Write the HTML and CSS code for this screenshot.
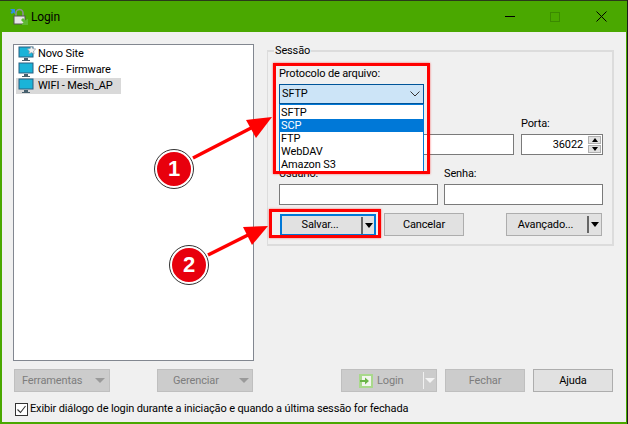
FILE: index.html
```html
<!DOCTYPE html>
<html lang="pt">
<head>
<meta charset="utf-8">
<title>Login</title>
<link rel="stylesheet" href="styles.css">
</head>
<body>
<div class="window">
  <header class="titlebar">
    <svg class="app-icon" width="18" height="18" viewBox="0 0 18 18">
      <path d="M6 8V5a3.500 3.500 0 0 1 7 0v3" fill="none" stroke="#8a8f94" stroke-width="1.600"/>
      <rect x="4" y="8" width="11" height="8" fill="#e6e6e6" stroke="#555"/>
      <path d="M0 1h5v5L3.500 4.500 2 6 0.500 4.500 2 3z" fill="#2f8fe0"/>
      <path d="M18 17h-6v-1l1.500-1.500L11 12l2-2 2.500 2.500L17 11h1z" fill="#5fb834"/>
    </svg>
    <span class="title">Login</span>
    <div class="win-controls">
      <span class="ctl ctl-min"></span>
      <span class="ctl ctl-max"></span>
      <svg class="ctl-close" width="11" height="11" viewBox="0 0 11 11"><path d="M.5.500l10 10M10.500.500l-10 10" stroke="#000" stroke-width="1" fill="none"/></svg>
    </div>
  </header>

  <div class="client">
    <div class="main">
      <ul class="site-list">
        <li class="site">
          <svg class="monitor" width="18" height="16" viewBox="0 0 18 16">
            <rect x="1" y="1" width="14" height="10" fill="#1ab3d8" stroke="#2b5f80"/>
            <path d="M6 12h4v2h2v1H4v-1h2z" fill="#47606e"/>
            <path d="M13.500 0l1.300 2.600 2.900.4-2.100 2 .5 2.900-2.600-1.400-2.600 1.400.5-2.900-2.100-2 2.900-.4z" fill="#f2f2f2" stroke="#8f9aa3" stroke-width=".7"/>
          </svg>
          <span>Novo Site</span>
        </li>
        <li class="site">
          <svg class="monitor" width="18" height="16" viewBox="0 0 18 16">
            <rect x="1" y="1" width="14" height="10" fill="#1ab3d8" stroke="#2b5f80"/>
            <path d="M6 12h4v2h2v1H4v-1h2z" fill="#47606e"/>
          </svg>
          <span>CPE - Firmware</span>
        </li>
        <li class="site site-selected">
          <svg class="monitor" width="18" height="16" viewBox="0 0 18 16">
            <rect x="1" y="1" width="14" height="10" fill="#1ab3d8" stroke="#2b5f80"/>
            <path d="M6 12h4v2h2v1H4v-1h2z" fill="#47606e"/>
          </svg>
          <span>WIFI - Mesh_AP</span>
        </li>
      </ul>

      <section class="group">
        <div class="group-title">Sessão</div>
        <div class="field-label label-protocol">Protocolo de arquivo:</div>
        <div class="combo-wrap">
          <div class="combo">
            <span>SFTP</span>
            <svg width="10" height="6" viewBox="0 0 10 6"><path d="M.5.500l4.500 4.500 4.500-4.500" fill="none" stroke="#333" stroke-width="1"/></svg>
          </div>
          <ul class="combo-list">
            <li>SFTP</li>
            <li class="combo-active">SCP</li>
            <li>FTP</li>
            <li>WebDAV</li>
            <li>Amazon S3</li>
          </ul>
        </div>

        <div class="row-host">
          <div class="col">
            <div class="field-label"></div>
            <div class="input"></div>
          </div>
          <div class="col">
            <div class="field-label">Porta:</div>
            <div class="input input-port">
              <span>36022</span>
              <div class="spin">
                <span class="spin-btn"><i class="tri-up"></i></span>
                <span class="spin-btn"><i class="tri-down"></i></span>
              </div>
            </div>
          </div>
        </div>

        <div class="row-user">
          <div class="col">
            <div class="field-label">Usuário:</div>
            <div class="input"></div>
          </div>
          <div class="col">
            <div class="field-label">Senha:</div>
            <div class="input"></div>
          </div>
        </div>

        <div class="row-actions">
          <button class="btn btn-save" type="button">
            <span class="btn-text">Salvar...</span>
            <span class="split"></span><i class="tri-menu"></i>
          </button>
          <button class="btn btn-cancel" type="button">Cancelar</button>
          <button class="btn btn-advanced" type="button">
            <span class="btn-text">Avançado...</span>
            <span class="split"></span><i class="tri-menu"></i>
          </button>
        </div>
      </section>
    </div>

    <div class="bottom-buttons">
      <button class="btn btn-off btn-tool" type="button"><span>Ferramentas</span><i class="tri-off"></i></button>
      <button class="btn btn-off btn-manage" type="button"><span>Gerenciar</span><i class="tri-off"></i></button>
      <button class="btn btn-off btn-login" type="button">
        <svg width="14" height="14" viewBox="0 0 14 14"><rect width="14" height="14" fill="#a9d98c"/><rect x="3" y="2" width="9" height="10" fill="#f2f6ee"/><path d="M1 6h5V3.500L10 7l-4 3.500V8H1z" fill="#6bb548"/></svg>
        <span class="login-text">Login</span>
        <span class="split split-off"></span><i class="tri-off tri-off-small"></i>
      </button>
      <button class="btn btn-off btn-close" type="button">Fechar</button>
      <button class="btn btn-help" type="button">Ajuda</button>
    </div>

    <label class="check-row">
      <svg width="13" height="13" viewBox="0 0 13 13"><rect x=".5" y=".5" width="12" height="12" fill="#fff" stroke="#333"/><path d="M2.500 6.500l3 3 5-6.500" fill="none" stroke="#333" stroke-width="1.100"/></svg>
      <span>Exibir diálogo de login durante a iniciação e quando a última sessão for fechada</span>
    </label>
  </div>

  <div class="mark mark-protocol"></div>
  <div class="mark mark-save"></div>

  <svg class="arrows" width="628" height="424" viewBox="0 0 628 424">
    <path d="M193 158L253 127" stroke="#f00" stroke-width="3.500" fill="none"/>
    <path d="M272 117L246 120L256 138z" fill="#f00"/>
    <path d="M208 255L248 235" stroke="#f00" stroke-width="3.500" fill="none"/>
    <path d="M268 226L243 227L252 245z" fill="#f00"/>
  </svg>
  <div class="badge badge-1">1</div>
  <div class="badge badge-2">2</div>
</div>
</body>
</html>
```

FILE: styles.css
```css
* { box-sizing: border-box; }
html, body { margin: 0; padding: 0; }
body {
  width: 628px;
  height: 424px;
  overflow: hidden;
  background: #1c1c1c;
  font-family: "Roboto", "Liberation Sans", sans-serif;
  font-size: 11px;
  letter-spacing: -.14px;
  line-height: 14px;
  color: #000;
}
ul { list-style: none; margin: 0; padding: 0; }

.window {
  position: relative;
  width: 627px;
  height: 424px;
  display: flex;
  flex-direction: column;
  background: #f0f0f0;
  border-left: 2px solid #4aa800;
  border-right: 1px solid #4aa800;
  border-bottom: 2px solid #4aa800;
}

/* Title bar */
.titlebar {
  height: 32px;
  flex: none;
  display: flex;
  align-items: center;
  background: #4aa800;
  border-top: 1px solid #2a3a1a;
  margin-left: -2px;
  margin-right: -1px;
  padding-left: 10px;
}
.app-icon { flex: none; }
.title { margin-left: 3px; font-size: 12px; }
.win-controls {
  margin-left: auto;
  display: flex;
  align-items: center;
  padding-right: 20px;
}
.ctl-min { width: 10px; height: 1px; background: #000; margin-right: 35px; }
.ctl-max { width: 10px; height: 10px; border: 1px solid #3b8a00; margin-right: 36px; }
.ctl-close { display: block; }

/* Client */
.client {
  flex: 1;
  display: flex;
  flex-direction: column;
  padding: 12px 13px 0 11px;
}
.main { display: flex; }

.site-list {
  width: 241px;
  height: 317px;
  flex: none;
  background: #fff;
  border: 1px solid #828790;
  padding: 1px 2px;
}
.site {
  display: flex;
  align-items: center;
  height: 16px;
  width: 105px;
  padding-left: 2px;
  white-space: nowrap;
}
.site .monitor { flex: none; margin-right: 2px; }
.site-selected { background: #d9d9d9; }

/* Session group */
.group {
  width: 347px;
  height: 196px;
  margin: 6px 0 0 13px;
  border: 1px solid #dcdcdc;
  border-width: 2px 2px 2px 1px;
  padding: 0 10px 0 11px;
  flex: none;
}
.group-title {
  width: max-content;
  margin: -8px 0 0 -5px;
  padding: 0 1px;
  height: 14px;
  background: #f0f0f0;
}
.field-label { height: 14px; line-height: 14px; }
.label-protocol { margin-top: 9px; }

.combo-wrap { position: relative; margin-top: 3px; width: 145px; height: 20px; }
.combo {
  display: flex;
  align-items: center;
  justify-content: space-between;
  height: 20px;
  background: #cce4f7;
  border: 1px solid #005499;
  padding: 0 3px 0 2px;
}
.combo-list {
  position: absolute;
  left: 0;
  top: 20px;
  width: 145px;
  height: 68px;
  background: #fff;
  border: 1px solid #0078d7;
  z-index: 1;
}
.combo-list li { height: 13px; line-height: 13px; padding-left: 1px; }
.combo-list li:first-child { margin-top: 1px; }
.combo-active { background: #0078d7; color: #fff; }

.row-host, .row-user { display: grid; }
.row-host { grid-template-columns: 235px 82px; column-gap: 7px; margin-top: 13px; }
.row-user { grid-template-columns: 159px 159px; column-gap: 6px; margin-top: 12px; }
.col { display: flex; flex-direction: column; }
.col .field-label { margin-bottom: 3px; }

.input {
  height: 21px;
  background: #fff;
  border: 1px solid #7a7a7a;
}
.input-port {
  display: flex;
  align-items: center;
  justify-content: flex-end;
  padding-right: 1px;
}
.input-port > span { margin-right: 5px; }
.spin { display: flex; flex-direction: column; gap: 1px; }
.spin-btn {
  width: 13px;
  height: 8px;
  background: #e1e1e1;
  border: 1px solid #b0b0b0;
  display: flex;
  align-items: center;
  justify-content: center;
}
.tri-up { border: 3px solid transparent; border-top: 0; border-bottom: 4px solid #000; }
.tri-down { border: 3px solid transparent; border-bottom: 0; border-top: 4px solid #000; }

.row-actions { display: flex; margin-top: 8px; }

/* Buttons */
.btn {
  font: inherit;
  letter-spacing: inherit;
  color: #000;
  height: 23px;
  margin: 0;
  padding: 0;
  background: #e1e1e1;
  border: 1px solid #adadad;
  display: flex;
  align-items: center;
  justify-content: center;
}
.btn-save {
  width: 96px;
  height: 22px;
  margin: 1px 0 0 1px;
  border: 2px solid #0078d7;
}
.btn-text { flex: 1; text-align: center; padding-right: 3px; }
.split { width: 2px; height: 17px; background: #666; margin-right: 2px; }
.tri-menu { border: 4px solid transparent; border-bottom: 0; border-top: 5px solid #000; margin-right: 2px; }
.btn-save .tri-menu { margin-right: 1px; }
.btn-cancel { width: 80px; margin-left: 8px; }
.btn-advanced { width: 96px; margin-left: 42px; }

.bottom-buttons { display: flex; margin-top: 8px; padding-left: 1px; }
.btn-off { background: #cccccc; border-color: #bfbfbf; color: #7d7d7d; }
.tri-off { border: 5px solid transparent; border-bottom: 0; border-top: 5px solid #9a9a9a; margin-left: auto; }
.tri-off-small { border-top-color: #f4f4f4; margin: 0 1px 0 0; }
.btn-tool, .btn-manage, .btn-login { width: 96px; justify-content: flex-start; }
.btn-tool { padding: 0 4px 0 7px; }
.btn-manage { margin-left: 47px; padding: 0 3px 0 15px; }
.btn-login { margin-left: 88px; padding-left: 17px; }
.login-text { margin-left: 4px; }
.split-off { width: 1px; background: #f0f0f0; margin: 0 1px 0 auto; }
.btn-close { width: 80px; margin-left: 8px; }
.btn-help { width: 80px; margin-left: 8px; }

.check-row {
  display: flex;
  align-items: center;
  margin: 10px 0 0 2px;
  height: 14px;
  white-space: nowrap;
}
.check-row svg { flex: none; margin-right: 2px; }

/* Annotations drawn over the dialog */
.mark {
  position: absolute;
  border: 3px solid #f00;
  box-shadow: 0 0 2px rgba(255, 0, 0, .6);
  z-index: 2;
}
.mark-protocol { left: 271px; top: 63px; width: 157px; height: 111px; }
.mark-save { left: 267px; top: 209px; width: 112px; height: 29px; }
.arrows { position: absolute; left: -2px; top: 0; z-index: 2; }
.badge {
  position: absolute;
  width: 38px;
  height: 38px;
  border-radius: 50%;
  background: #e8000d;
  border: 2px solid #fff;
  outline: 1px solid #333;
  color: #fff;
  font-family: "Liberation Sans", sans-serif;
  font-weight: 700;
  font-size: 22px;
  line-height: 34px;
  text-align: center;
  z-index: 3;
}
.badge-1 { left: 153px; top: 150px; }
.badge-2 { left: 168px; top: 246px; }
```
